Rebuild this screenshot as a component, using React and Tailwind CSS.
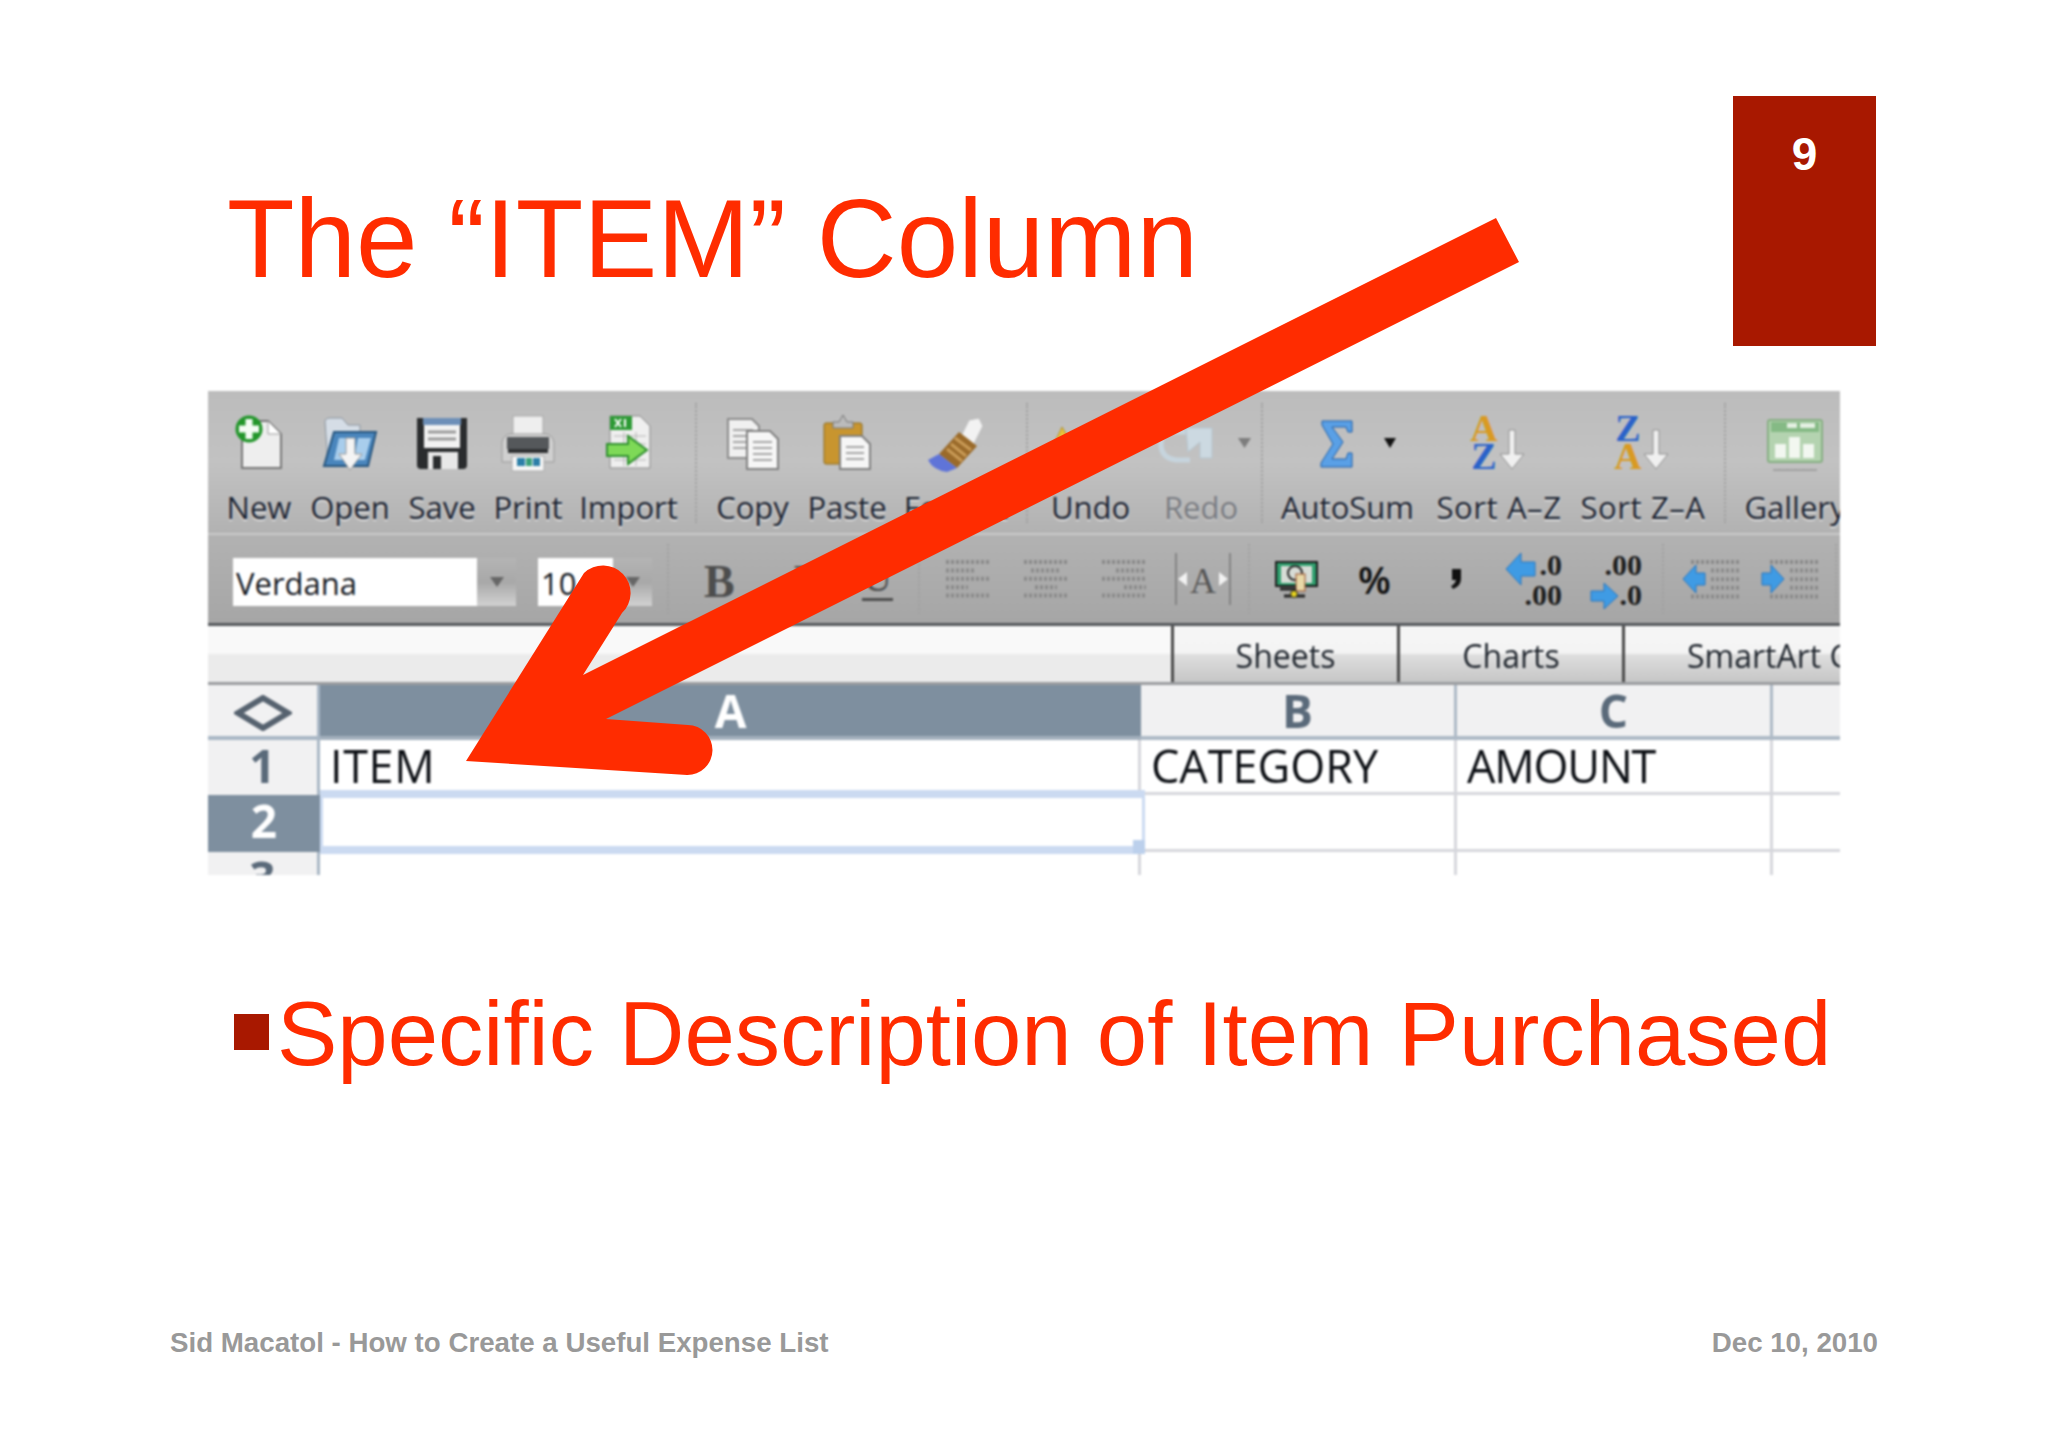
const labelText = "font-['Open_Sans',sans-serif] text-[31px] leading-[40px] whitespace-nowrap text-[#1a2230] [text-shadow:0_2px_1px_#dcdcdc]";

function Sep({ className = '' }) {
  return <div className={`w-[2px] border-l-2 border-dotted border-[#a0a0a0] ${className}`} />;
}

function Svg({ w, h = 60, children, className = '' }) {
  return (
    <svg width={w} height={h} viewBox={`0 0 ${w} ${h}`} className={`block shrink-0 overflow-visible ${className}`}>
      {children}
    </svg>
  );
}

function NewIcon() {
  return (
    <Svg w={48}>
      <path d="M7 9H33L46 22V56H7Z" fill="#eeeeee" stroke="#777" strokeWidth="2" />
      <path d="M33 9V22H46Z" fill="#fff" stroke="#999" />
      <circle cx="14" cy="17" r="13.5" fill="#23962b" />
      <path d="M14 7V27M4 17H24" stroke="#f4fbf4" strokeWidth="7" />
    </Svg>
  );
}

function OpenIcon() {
  return (
    <Svg w={56}>
      <path d="M6 54L3 10Q3 6 8 6H20L26 13H38V54Z" fill="#d5dde6" stroke="#8a949e" />
      <path d="M2 54L12 20H54L46 54Z" fill="#4a86bd" stroke="#27557e" strokeWidth="2" />
      <path d="M17 26H30L26 48H12ZM36 26H49L43 48H32Z" fill="#a8cdec" />
      <path d="M24 26H33V42H40L28 58L17 42H24Z" fill="#f4f4f4" stroke="#999" />
    </Svg>
  );
}

function SaveIcon() {
  return (
    <Svg w={52}>
      <path d="M1 6H51V53Q51 57 47 57H5Q1 57 1 53Z" fill="#2a2c2e" />
      <rect x="7" y="6" width="38" height="7" fill="#6d8fb8" />
      <rect x="8" y="13" width="36" height="23" fill="#f2f2f2" />
      <path d="M12 20H40M12 27H40" stroke="#9a9a9a" strokeWidth="3" />
      <rect x="12" y="40" width="30" height="17" fill="#e8e8e8" />
      <rect x="17" y="44" width="8" height="13" fill="#2a2c2e" />
    </Svg>
  );
}

function PrintIcon() {
  return (
    <Svg w={58}>
      <rect x="14" y="4" width="30" height="24" fill="#eeeeee" stroke="#a8a8a8" />
      <path d="M3 30Q5 22 12 22H46Q53 22 55 30V50H3Z" fill="#d0d0d0" stroke="#999" />
      <rect x="8" y="25" width="42" height="12" fill="#55585b" />
      <rect x="9" y="37" width="40" height="4" fill="#2f3133" />
      <rect x="13" y="44" width="32" height="15" fill="#f6f6f6" stroke="#aaa" />
      <rect x="18" y="46" width="8" height="8" fill="#2c7fa8" />
      <rect x="27" y="46" width="6" height="8" fill="#3aa07a" />
      <rect x="34" y="46" width="7" height="8" fill="#2c7fa8" />
    </Svg>
  );
}

function ImportIcon() {
  return (
    <Svg w={46}>
      <path d="M4 4H34L44 14V56H4Z" fill="#efefef" stroke="#888" />
      <rect x="4" y="4" width="22" height="14" fill="#2d9a35" />
      <path d="M9 7L15 15M15 7L9 15M19 7V15" stroke="#fff" strokeWidth="2" />
      <path d="M8 24H40M8 32H40M8 40H40M8 48H40M18 20V54M30 20V54" stroke="#b5b5b5" />
      <path d="M1 32H22V24L41 38L22 52V44H1Z" fill="#7ed957" stroke="#2f8f2f" strokeWidth="2" />
    </Svg>
  );
}

function Lines({ x, y, w, n = 4, gap = 6 }) {
  return Array.from({ length: n }).map((_, i) => (
    <path key={i} d={`M${x} ${y + i * gap}H${x + w}`} stroke="#a5a5a5" strokeWidth="2" />
  ));
}

function CopyIcon() {
  return (
    <Svg w={54}>
      <path d="M2 7H26L33 14V46H2Z" fill="#f0f0f0" stroke="#8b8b8b" strokeWidth="2" />
      <Lines x={7} y={18} w={20} />
      <path d="M21 19H44L52 27V57H21Z" fill="#f6f6f6" stroke="#808080" strokeWidth="2" />
      <Lines x={27} y={30} w={19} />
    </Svg>
  );
}

function PasteIcon() {
  return (
    <Svg w={50}>
      <rect x="2" y="11" width="38" height="41" rx="2" fill="#c8952f" stroke="#8b6a1e" />
      <path d="M11 16V10H17L21 3L25 10H31V16Z" fill="#bbb" stroke="#777" />
      <path d="M18 24H40L48 32V57H18Z" fill="#f6f6f6" stroke="#808080" strokeWidth="2" />
      <Lines x={24} y={35} w={18} n={3} />
    </Svg>
  );
}

function BrushIcon() {
  return (
    <Svg w={58}>
      <path d="M34 24L42 8L52 6L56 14L46 34Z" fill="#f2f2f2" stroke="#bbb" />
      <path d="M32 20L50 34L30 56L12 42Z" fill="#9a6a2a" />
      <path d="M28 26L44 38M24 32L39 44M20 37L35 49" stroke="#c99b57" strokeWidth="3" />
      <path d="M12 42L30 56L20 60Q6 58 1 48Z" fill="#5f74d8" />
    </Svg>
  );
}

function UndoIcon() {
  return (
    <Svg w={56}>
      <path d="M0 32L8 15L18 32H13Q16 46 44 48V54Q8 54 4 32Z" fill="#e8c23a" stroke="#b2922a" />
    </Svg>
  );
}

function RedoIcon() {
  return (
    <Svg w={93}>
      <path d="M34 20H12Q2 22 3 34Q4 46 18 48H32" fill="none" stroke="#c6d4dd" strokeWidth="5" />
      <path d="M28 16H54V46H42V30L30 40Z" fill="#ccd9e1" stroke="#b6c5cf" />
      <path d="M80 26H93L86.5 36Z" fill="#7d7d7d" />
    </Svg>
  );
}

function SumIcon() {
  return (
    <Svg w={77}>
      <path d="M3 9H33V20H29L27 15H13L24 30L13 47H27L29 41H33V55H2V51L14 32L3 13Z" fill="#5aa0e6" stroke="#1e5fa8" />
      <path d="M65 26H77L71 36Z" fill="#111" />
    </Svg>
  );
}

function SortIcon({ top, bottom, topFill, bottomFill }) {
  return (
    <Svg w={56}>
      <text x="13" y="29" textAnchor="middle" fontFamily="Liberation Serif" fontWeight="700" fontSize="38" fill={topFill}>{top}</text>
      <text x="13" y="57" textAnchor="middle" fontFamily="Liberation Serif" fontWeight="700" fontSize="38" fill={bottomFill}>{bottom}</text>
      <path d="M38 18H44V42H53L41 57L29 42H38Z" fill="#f0f0f0" stroke="#8f8f8f" />
    </Svg>
  );
}

function GalleryIcon() {
  return (
    <Svg w={56}>
      <rect x="1" y="8" width="54" height="42" rx="2" fill="#b4d3b0" stroke="#86ae82" strokeWidth="2" />
      <rect x="4" y="10" width="48" height="10" fill="#85ba85" />
      <path d="M20 11H30V16H20ZM33 11H48V16H33Z" fill="#e4f0e2" />
      <rect x="8" y="32" width="11" height="14" fill="#f2f7f0" />
      <rect x="22" y="25" width="11" height="21" fill="#f2f7f0" />
      <rect x="36" y="32" width="11" height="14" fill="#f2f7f0" />
      <path d="M6 58H50" stroke="#a0a0a0" strokeWidth="2" />
    </Svg>
  );
}

const tools = [
  { label: 'New', icon: <NewIcon />, className: 'w-[102px]' },
  { label: 'Open', icon: <OpenIcon />, className: 'w-[80px]' },
  { label: 'Save', icon: <SaveIcon />, className: 'w-[104px]' },
  { label: 'Print', icon: <PrintIcon />, className: 'w-[68px]' },
  { label: 'Import', icon: <ImportIcon />, className: 'w-[133px]' },
  { sep: true },
  { label: 'Copy', icon: <CopyIcon />, className: 'w-[111px]' },
  { label: 'Paste', icon: <PasteIcon />, className: 'w-[78px]' },
  { label: 'Format', icon: <BrushIcon />, className: 'w-[140px]' },
  { sep: true },
  { label: 'Undo', icon: <UndoIcon />, className: 'w-[125px]', iconClass: 'mr-[18px]' },
  { label: 'Redo', icon: <RedoIcon />, className: 'w-[96px] mr-[12px]', iconClass: 'ml-[6px]', labelClass: 'opacity-40' },
  { sep: true },
  { label: 'AutoSum', icon: <SumIcon />, className: 'w-[169px]', iconClass: 'ml-[20px]' },
  { label: 'Sort A–Z', icon: <SortIcon top="A" bottom="Z" topFill="#d99a22" bottomFill="#2a62c9" />, className: 'w-[134px]', labelClass: 'tracking-[0.6px]' },
  { label: 'Sort Z–A', icon: <SortIcon top="Z" bottom="A" topFill="#2a62c9" bottomFill="#d99a22" />, className: 'w-[154px]', labelClass: 'tracking-[0.6px]' },
  { sep: true, className: 'ml-[4px]' },
  { label: 'Gallery', icon: <GalleryIcon />, className: 'w-[115px] ml-[8px]', iconClass: 'ml-[6px]', labelClass: 'ml-[7px]' },
];

function Tool({ tool }) {
  return (
    <div className={`flex shrink-0 flex-col items-center ${tool.className}`}>
      <div className={`flex h-[60px] items-start justify-center ${tool.iconClass || ''}`}>{tool.icon}</div>
      <div className={`mt-[15px] ${labelText} ${tool.labelClass || ''}`}>{tool.label}</div>
    </div>
  );
}

function Caret({ className = '' }) {
  return (
    <svg width="14" height="10" viewBox="0 0 14 10" className={className}>
      <path d="M0 0H14L7 10Z" fill="currentColor" />
    </svg>
  );
}

function Select({ value, className }) {
  return (
    <div className="mt-[6px] flex h-[48px] shrink-0">
      <div className={`bg-white font-['Open_Sans',sans-serif] text-[31px] leading-[50px] text-[#14181f] ${className}`}>
        {value}
      </div>
      <div className="flex w-[39px] items-center justify-center bg-linear-to-b from-[#b4b4b4] via-[#a8a8a8] to-[#d2d2d2] text-[#666]">
        <Caret />
      </div>
    </div>
  );
}

function AlignIcon({ align }) {
  const widths = [44, 30, 44, 22, 44];
  return (
    <Svg w={44} h={38}>
      {widths.map((w, i) => {
        const x = align === 'left' ? 0 : align === 'center' ? (44 - w) / 2 : 44 - w;
        return <path key={i} d={`M${x} ${2 + i * 8.4}H${x + w}`} stroke="#8a8a8a" strokeWidth="4" strokeDasharray="3 2" />;
      })}
    </Svg>
  );
}

function WrapIcon() {
  return (
    <Svg w={56} h={52}>
      <path d="M1 0V52M55 0V52" stroke="#777" strokeWidth="1.5" />
      <text x="28" y="40" textAnchor="middle" fontFamily="Liberation Serif" fontSize="36" fill="#555">A</text>
      <path d="M3 26L12 19V33ZM53 26L44 19V33Z" fill="#f2f2f2" />
    </Svg>
  );
}

function CurrencyIcon() {
  return (
    <Svg w={43} h={37}>
      <rect x="1" y="1" width="41" height="24" fill="#2f9e6d" stroke="#1c1c1c" strokeWidth="2" />
      <rect x="6" y="5" width="31" height="17" fill="#d7dcd6" />
      <circle cx="20" cy="12" r="7" fill="none" stroke="#2a2a2a" strokeWidth="2" />
      <rect x="21" y="13" width="9" height="17" fill="#e8d9a8" stroke="#9a4e2a" />
      <path d="M5 28H21M9 35H30" stroke="#222" strokeWidth="3" />
      <circle cx="19" cy="33" r="3.5" fill="#e6d21f" stroke="#222" />
    </Svg>
  );
}

function CommaIcon() {
  return (
    <Svg w={12} h={20}>
      <path d="M2 0H11V10Q11 17 3 20L1 17Q5 15 6 11H2Z" fill="#111" />
    </Svg>
  );
}

function DecimalIcon({ w, flip }) {
  const top = flip ? '.00' : '.0';
  const bottom = flip ? '.0' : '.00';
  const text = { fontFamily: 'Liberation Serif', fontWeight: 700, fontSize: 30, fill: '#1d1d1d', textAnchor: 'end' };
  return (
    <Svg w={w} h={56}>
      <text x={w} y="24" {...text}>{top}</text>
      <text x={w} y="54" {...text}>{bottom}</text>
      {flip ? (
        <path d="M1 40H14V32L28 45L14 58V50H1Z" fill="#3f9be4" stroke="#2a76bd" />
      ) : (
        <path d="M1 18L16 2V11H30V25H16V34Z" fill="#3f9be4" stroke="#2a76bd" />
      )}
    </Svg>
  );
}

function IndentIcon({ w, right }) {
  return (
    <Svg w={w} h={40}>
      {[0, 1, 2, 3, 4].map((i) => {
        const long = i === 0 || i === 4;
        const x = long ? 8 : 28;
        return <path key={i} d={`M${x} ${3 + i * 8.6}H${w}`} stroke="#8a8a8a" strokeWidth="4" strokeDasharray="3 2" />;
      })}
      {right ? (
        <path d="M0 14H9V6L22 20L9 34V26H0Z" fill="#3f9be4" stroke="#2a76bd" />
      ) : (
        <path d="M0 20L13 6V14H22V26H13V34Z" fill="#3f9be4" stroke="#2a76bd" />
      )}
    </Svg>
  );
}

function Tab({ label, className = '' }) {
  return (
    <div className={`h-full border-l-[3px] border-[#4a4a4a] bg-[linear-gradient(#f6f6f6_0,#f4f4f4_48%,#dedede_52%,#c6c6c6_100%)] font-['Open_Sans',sans-serif] text-[32px] leading-[60px] text-[#20262e] whitespace-nowrap overflow-hidden ${className}`}>
      {label}
    </div>
  );
}

const headText = "font-['Open_Sans',sans-serif] font-bold text-[46px] leading-[50px]";
const cellText = "font-['Open_Sans',sans-serif] text-[45px] leading-[52px] text-[#0c0f14] pl-[10px]";
const cellLine = 'border-r-[3px] border-b-[3px] border-[#d6d7dc]';

function Sheet() {
  return (
    <div className="grid flex-1 grid-cols-[112px_821px_316px_316px_67px] grid-rows-[55px_55px_57px_23px]">
      <div className="flex items-center justify-center border-r-[3px] border-b-[4px] border-[#a9b7c5] bg-[#f1f1f2] pt-[4px]">
        <svg width="58" height="36" viewBox="0 0 58 36">
          <path d="M29 3L54 18L29 33L4 18Z" fill="none" stroke="#56626f" strokeWidth="6" />
        </svg>
      </div>
      <div className={`border-b-[4px] border-[#a3b0bd] bg-[#7e8f9f] text-center text-white ${headText}`}>A</div>
      <div className={`border-r-[3px] border-b-[4px] border-[#aebac6] bg-[#f1f1f2] text-center text-[#5a6a7a] ${headText}`}>B</div>
      <div className={`border-r-[3px] border-b-[4px] border-[#aebac6] bg-[#f1f1f2] text-center text-[#5a6a7a] ${headText}`}>C</div>
      <div className="border-b-[4px] border-[#aebac6] bg-[#f1f1f2]" />

      <div className={`border-r-[3px] border-[#a9b7c5] bg-[#f1f1f2] text-center text-[#5a6a7a] ${headText}`}>1</div>
      <div className={`${cellLine} ${cellText} tracking-[0.6px]`}>ITEM</div>
      <div className={`${cellLine} ${cellText}`}>CATEGORY</div>
      <div className={`${cellLine} ${cellText} tracking-[-1.2px]`}>AMOUNT</div>
      <div className="border-b-[3px] border-[#d6d7dc]" />

      <div className={`bg-[#7e8f9f] text-center text-white ${headText}`}>2</div>
      <div className="relative">
        <div className="absolute -top-[5px] left-[0px] -right-[4px] -bottom-[2px] z-10 border-x-[3px] border-y-[8px] border-[#cbdaf1]" />
        <div className="absolute -right-[4px] -bottom-[2px] z-10 h-[14px] w-[12px] bg-[#bcd0ec]" />
      </div>
      <div className={cellLine} />
      <div className={cellLine} />
      <div className="border-b-[3px] border-[#d6d7dc]" />

      <div className={`overflow-hidden border-r-[3px] border-[#a9b7c5] bg-[#f1f1f2] text-center text-[#5a6a7a] ${headText}`}>3</div>
      <div className="border-r-[3px] border-[#d6d7dc]" />
      <div className="border-r-[3px] border-[#d6d7dc]" />
      <div className="border-r-[3px] border-[#d6d7dc]" />
      <div />
    </div>
  );
}

function Screenshot() {
  return (
    <div className="mt-[45px] ml-[208px] flex h-[484px] w-[1632px] flex-col overflow-hidden blur-[0.8px]">
      <div className="flex h-[142px] shrink-0 bg-linear-to-b from-[#bcbcbc] via-[#c2c2c2] to-[#b2b2b2] pt-[21px]">
        {tools.map((tool, i) =>
          tool.sep ? (
            <Sep key={i} className={`-mt-[9px] h-[120px] shrink-0 ${tool.className || ''}`} />
          ) : (
            <Tool key={i} tool={tool} />
          )
        )}
      </div>
      <div className="h-[2px] shrink-0 bg-[#cacaca]" />
      <div className="flex h-[88px] shrink-0 items-center bg-linear-to-b from-[#b2b2b2] to-[#a6a6a6] pl-[25px]">
        <Select value="Verdana" className="w-[244px] pl-[3px]" />
        <Select value="10" className="ml-[22px] w-[75px] pl-[3px]" />
        <Sep className="ml-[15px] h-[70px]" />
        <span className="mt-[5px] ml-[35px] w-[30px] font-['Liberation_Serif',serif] text-[46px] leading-none font-bold text-[#4d4d4d]">B</span>
        <span className="mt-[5px] ml-[56px] w-[25px] font-['Liberation_Serif',serif] text-[46px] leading-none font-bold text-[#4d4d4d] italic">I</span>
        <span className="ml-[47px] w-[31px] border-b-[3px] border-[#4d4d4d] text-center font-['Liberation_Serif',serif] text-[40px] leading-none text-[#4d4d4d]">U</span>
        <Sep className="ml-[25px] h-[70px]" />
        <div className="ml-[26px]"><AlignIcon align="left" /></div>
        <div className="ml-[34px]"><AlignIcon align="center" /></div>
        <div className="ml-[34px]"><AlignIcon align="right" /></div>
        <div className="ml-[29px]"><WrapIcon /></div>
        <Sep className="ml-[17px] h-[70px]" />
        <div className="ml-[25px]"><CurrencyIcon /></div>
        <span className="ml-[40px] w-[37px] font-['Open_Sans',sans-serif] text-[38px] leading-none font-semibold text-[#111]">%</span>
        <div className="ml-[55px]"><CommaIcon /></div>
        <div className="ml-[43px]"><DecimalIcon w={57} /></div>
        <div className="ml-[28px]"><DecimalIcon w={52} flip /></div>
        <Sep className="ml-[20px] h-[70px]" />
        <div className="ml-[19px]"><IndentIcon w={57} /></div>
        <div className="ml-[22px]"><IndentIcon w={56} right /></div>
        <Sep className="ml-[17px] h-[70px]" />
      </div>
      <div className="h-[3px] shrink-0 bg-[#55585c]" />
      <div className="flex h-[56px] shrink-0">
        <div className="h-full w-[963px] bg-[linear-gradient(#f9f9f9_0,#f9f9f9_48%,#ebebeb_52%,#ebebeb_100%)]" />
        <Tab label="Sheets" className="w-[226px] text-center" />
        <Tab label="Charts" className="w-[225px] text-center" />
        <Tab label="SmartArt Graphics" className="w-[218px] pl-[62px]" />
      </div>
      <div className="h-[3px] shrink-0 bg-[#9b9da0]" />
      <Sheet />
    </div>
  );
}

function Arrow() {
  return (
    <svg className="pointer-events-none absolute inset-0 h-full w-full" viewBox="0 0 2048 1447">
      <path
        d="M1496 218L1519 262L606 719L688 725A25 25 0 0 1 687 775L466 761L584 573A25 25 0 0 1 622 613L583 675Z"
        fill="#ff2c00"
      />
    </svg>
  );
}

export default function App() {
  return (
    <div className="relative flex h-[1447px] w-[2048px] flex-col overflow-hidden bg-white font-['Liberation_Sans',Arial,sans-serif]">
      <header className="flex items-start justify-between pt-[96px] pr-[172px] pl-[227px]">
        <h1 className="mt-[88px] text-[110.6px] leading-none font-normal text-[#ff2c00]">The “ITEM” Column</h1>
        <div className="h-[250px] w-[143px] bg-[#a81800] pt-[35px] text-center text-[46px] leading-none font-bold text-white">9</div>
      </header>

      <Screenshot />

      <div className="mt-[114px] ml-[234px] flex items-start">
        <div className="mt-[25px] h-[36px] w-[35px] bg-[#a81800]" />
        <p className="ml-[8px] text-[90.5px] leading-none whitespace-nowrap text-[#ff2c00]">Specific Description of Item Purchased</p>
      </div>

      <footer className="mt-[249px] flex justify-between pr-[170px] pl-[170px] text-[27.7px] leading-none font-bold text-[#999999]">
        <span>Sid Macatol - How to Create a Useful Expense List</span>
        <span>Dec 10, 2010</span>
      </footer>

      <Arrow />
    </div>
  );
}
